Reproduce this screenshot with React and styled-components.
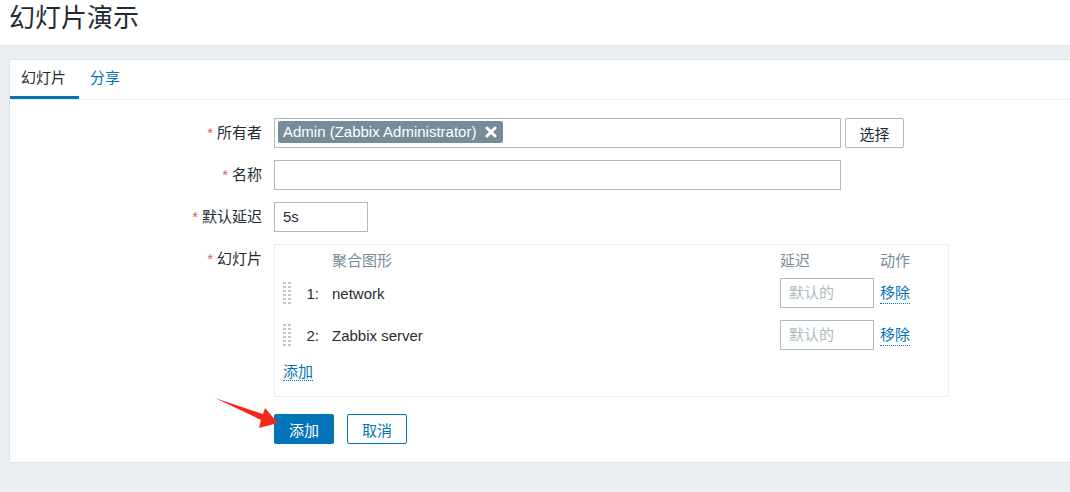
import React from 'react'
import styled, { createGlobalStyle } from 'styled-components'

const GlobalStyle = createGlobalStyle`
  html, body {
    margin: 0;
    padding: 0;
    background: #ebeef0;
    overflow: hidden;
  }
  body {
    font-family: "Liberation Sans", "Noto Sans CJK SC", sans-serif;
    font-size: 15px;
    color: #1f2c33;
  }
  * { box-sizing: border-box; }
`

const Page = styled.div`
  position: relative;
  width: 1070px;
  height: 492px;
  overflow: hidden;
`

const Header = styled.header`
  height: 46px;
  background: #ffffff;
  border-bottom: 1px solid #dfe4e7;
  padding: 3px 9px 0;
  h1 {
    margin: 0;
    font-weight: normal;
    font-size: 26px;
    line-height: 30px;
    color: #1f2c33;
  }
`

const Panel = styled.section`
  margin: 13px -20px 0 9px;
  background: #ffffff;
  border: 1px solid #dfe4e7;
  height: 404px;
`

const TabList = styled.nav`
  display: flex;
  border-bottom: 1px solid #ebeef0;
`

const Tab = styled.a`
  display: block;
  padding: 0 13px 0 11px;
  line-height: 36px;
  border-bottom: 3px solid ${p => (p.$active ? '#0275b8' : 'transparent')};
  color: ${p => (p.$active ? '#1f2c33' : '#0275b8')};
  cursor: pointer;
`

const Form = styled.div`
  display: grid;
  grid-template-columns: 252px 1fr;
  column-gap: 12px;
  row-gap: 12px;
  padding-top: 18px;
  align-items: start;
`

const Label = styled.label`
  text-align: right;
  line-height: 30px;
  &::before {
    content: '*';
    color: #e45959;
    margin-right: 4px;
  }
`

const Field = styled.div`
  display: flex;
  gap: 4px;
  align-items: center;
`

const Input = styled.div`
  width: ${p => p.$w}px;
  height: 30px;
  border: 1px solid #acbbc2;
  background: #fff;
  padding: 0 8px;
  line-height: 28px;
  color: ${p => (p.$placeholder ? '#acbbc2' : '#1f2c33')};
`

const MultiSelect = styled.div`
  width: 567px;
  height: 30px;
  border: 1px solid #acbbc2;
  padding: 2px 3px;
  display: flex;
`

const Tag = styled.span`
  display: inline-flex;
  align-items: center;
  gap: 9px;
  height: 22px;
  padding: 0 6px 0 5px;
  background: #768d99;
  color: #ffffff;
  border-radius: 2px;
  line-height: 22px;
`

const Button = styled.button`
  height: 30px;
  width: ${p => p.$w || 59}px;
  padding: 0;
  font: inherit;
  border-radius: 2px;
  cursor: pointer;
  border: 1px solid ${p => (p.$variant === 'plain' ? '#acbbc2' : '#0275b8')};
  background: ${p => (p.$variant === 'primary' ? '#0275b8' : '#ffffff')};
  color: ${p =>
    p.$variant === 'primary' ? '#ffffff' : p.$variant === 'plain' ? '#1f2c33' : '#0275b8'};
`

const SlideTable = styled.div`
  width: 675px;
  border: 1px solid #ebeef0;
  padding: 6px 5px 14px 8px;
  display: grid;
  grid-template-columns: 16px 20px 1fr 94px 69px;
  align-items: center;
`

const Th = styled.div`
  color: #768d99;
  line-height: 20px;
  padding-left: ${p => p.$pad || 0}px;
  margin-bottom: 7px;
`

const Cell = styled.div`
  height: 30px;
  margin-bottom: 12px;
  padding-left: ${p => p.$pad || 0}px;
  display: flex;
  align-items: center;
  justify-content: ${p => (p.$right ? 'flex-end' : 'flex-start')};
`

const Link = styled.a`
  color: #0275b8;
  line-height: 20px;
  border-bottom: 1px dotted #0275b8;
  cursor: pointer;
`

const AddRow = styled.div`
  grid-column: 1 / -1;
  line-height: 20px;
`

const Actions = styled.div`
  grid-column: 2;
  display: flex;
  gap: 13px;
  margin-top: 5px;
`

const Arrow = styled.svg`
  position: absolute;
  left: 0;
  top: 0;
  pointer-events: none;
`

const DragHandle = () => (
  <svg width="8" height="22" viewBox="0 0 8 22">
    {[0, 1, 2, 3, 4, 5].map(r =>
      [0, 5].map(c => (
        <rect key={`${r}-${c}`} x={c} y={r * 4} width="3" height="2" fill="#bcc7cd" />
      ))
    )}
  </svg>
)

const CloseIcon = () => (
  <svg width="12" height="12" viewBox="0 0 12 12">
    <path d="M2 2 L10 10 M10 2 L2 10" stroke="#ffffff" strokeWidth="3" strokeLinecap="round" />
  </svg>
)

const slides = [
  { id: 1, name: 'network' },
  { id: 2, name: 'Zabbix server' },
]

export default function App() {
  return (
    <Page>
      <GlobalStyle />
      <Header>
        <h1>幻灯片演示</h1>
      </Header>
      <Panel>
        <TabList>
          <Tab $active>幻灯片</Tab>
          <Tab>分享</Tab>
        </TabList>
        <Form>
          <Label>所有者</Label>
          <Field>
            <MultiSelect>
              <Tag>
                Admin (Zabbix Administrator)
                <CloseIcon />
              </Tag>
            </MultiSelect>
            <Button $variant="plain">选择</Button>
          </Field>

          <Label>名称</Label>
          <Field>
            <Input $w={567} />
          </Field>

          <Label>默认延迟</Label>
          <Field>
            <Input $w={94}>5s</Input>
          </Field>

          <Label>幻灯片</Label>
          <SlideTable>
            <Th />
            <Th />
            <Th $pad={13}>聚合图形</Th>
            <Th>延迟</Th>
            <Th $pad={6}>动作</Th>
            {slides.map(s => (
              <React.Fragment key={s.id}>
                <Cell><DragHandle /></Cell>
                <Cell $right>{s.id}:</Cell>
                <Cell $pad={13}>{s.name}</Cell>
                <Cell><Input $w={94} $placeholder>默认的</Input></Cell>
                <Cell $pad={6}><Link>移除</Link></Cell>
              </React.Fragment>
            ))}
            <AddRow><Link>添加</Link></AddRow>
          </SlideTable>

          <Actions>
            <Button $variant="primary" $w={60}>添加</Button>
            <Button $w={60}>取消</Button>
          </Actions>
        </Form>
      </Panel>
      <Arrow width="1070" height="492">
        <polygon points="215,398 263,414 265,408 278,423 259,428 261,420" fill="#f5281e" />
      </Arrow>
    </Page>
  )
}
